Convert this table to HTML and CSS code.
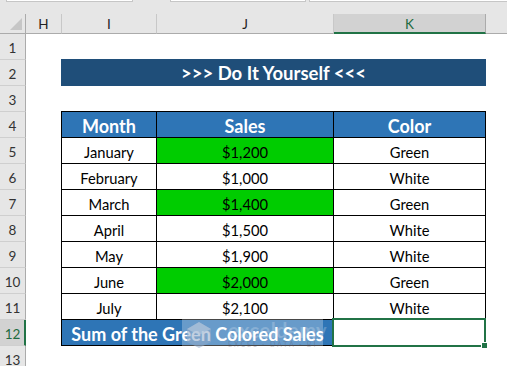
FILE: index.html
```html
<!DOCTYPE html>
<html>
<head>
<meta charset="utf-8">
<link rel="stylesheet" href="styles.css">
</head>
<body>
<div class="sheet">
  <div class="topbar">
    <div class="box namebox"></div>
    <div class="box fxbox"></div>
    <div class="box formula"></div>
  </div>
  <div class="hdr">
    <div class="corner"><svg width="12" height="12" viewBox="0 0 12 12"><polygon points="12,0 12,12 0,12" fill="#c6c6c6"/></svg></div>
    <div class="ch">H</div>
    <div class="ch">I</div>
    <div class="ch">J</div>
    <div class="ch sel">K</div>
    <div class="ch rest"></div>
  </div>
  <div class="main">
    <div class="rowhdrs">
      <div class="rh">1</div>
      <div class="rh">2</div>
      <div class="rh">3</div>
      <div class="rh">4</div>
      <div class="rh">5</div>
      <div class="rh">6</div>
      <div class="rh">7</div>
      <div class="rh">8</div>
      <div class="rh">9</div>
      <div class="rh">10</div>
      <div class="rh">11</div>
      <div class="rh sel">12</div>
      <div class="rh">13</div>
    </div>
    <div class="cells">
      <div class="title">&gt;&gt;&gt; Do It Yourself &lt;&lt;&lt;</div>
      <table class="data">
        <colgroup><col class="c1"><col class="c2"><col class="c3"></colgroup>
        <tr class="head"><td>Month</td><td>Sales</td><td>Color</td></tr>
        <tr><td>January</td><td class="green">$1,200</td><td>Green</td></tr>
        <tr><td>February</td><td>$1,000</td><td>White</td></tr>
        <tr><td>March</td><td class="green">$1,400</td><td>Green</td></tr>
        <tr><td>April</td><td>$1,500</td><td>White</td></tr>
        <tr><td>May</td><td>$1,900</td><td>White</td></tr>
        <tr><td>June</td><td class="green">$2,000</td><td>Green</td></tr>
        <tr><td>July</td><td>$2,100</td><td>White</td></tr>
        <tr class="sum"><td colspan="2" class="sumlabel">Sum of the Green Colored Sales</td><td class="active"><span class="handle"></span></td></tr>
      </table>
    </div>
  </div>
  <div class="watermark">
    <svg class="wm-logo" width="26" height="28" viewBox="0 0 26 28"><polygon points="13,1 25,8 25,21 13,27 1,21 1,8" fill="#8fa9c8" opacity="0.55"/><polygon points="13,1 25,8 13,14 1,8" fill="#b9cbe0" opacity="0.6"/></svg>
    <div class="wm-text">
      <div class="wm-name">exceldemy</div>
      <div class="wm-sub">EXCEL · DATA · BI</div>
    </div>
  </div>
</div>
</body>
</html>
```
FILE: styles.css
```css
html, body {
  margin: 0;
  padding: 0;
  background: #ffffff;
}

body {
  width: 507px;
  height: 366px;
  overflow: hidden;
  font-family: Lato, "Open Sans", sans-serif;
}

.sheet {
  position: relative;
  width: 507px;
  height: 366px;
  overflow: hidden;
}

.topbar {
  height: 14px;
  background: #e6e6e6;
  display: flex;
  align-items: flex-start;
}

.box {
  height: 1px;
  background: #ffffff;
  border: 1px solid #c6c6c6;
  border-top: none;
}

.namebox {
  margin-left: 6px;
  width: 125px;
}

.fxbox {
  margin-left: 37px;
  width: 134px;
}

.formula {
  margin-left: 3px;
  flex: 1;
  border-right: none;
}

.hdr {
  display: grid;
  grid-template-columns: 26px 36px 95px 177px 152px 1fr;
  height: 20px;
}

.corner,
.ch {
  box-sizing: border-box;
  background: #e6e6e6;
  border-right: 1px solid #c8c8c8;
  border-bottom: 1px solid #ababab;
}

.corner {
  display: flex;
  align-items: flex-end;
  justify-content: flex-end;
  padding: 0 3px 3px 0;
  border-right-color: #ababab;
}

.corner svg {
  display: block;
}

.ch {
  display: flex;
  align-items: center;
  justify-content: center;
  font-size: 13.5px;
  color: #222222;
  padding-top: 1px;
}

.ch.sel {
  background: #d2d2d2;
  color: #1e6b40;
  border-bottom: 2px solid #217346;
  border-right-color: #ababab;
}

.ch.rest {
  border-right: none;
}

.main {
  display: flex;
}

.rowhdrs {
  width: 26px;
  display: flex;
  flex-direction: column;
}

.rh {
  box-sizing: border-box;
  height: 26px;
  background: #e6e6e6;
  border-right: 1px solid #ababab;
  border-bottom: 1px solid #cfcfcf;
  display: flex;
  align-items: flex-end;
  justify-content: center;
  padding-bottom: 4px;
  font-size: 13.5px;
  line-height: 13px;
  color: #333333;
}

.rh.sel {
  background: #d2d2d2;
  color: #1e6b40;
  border-right: 2px solid #217346;
  padding-left: 1px;
}

.cells {
  flex: 1;
  display: grid;
  grid-template-columns: 36px 95px 177px 152px 1fr;
  grid-template-rows: repeat(13, 26px);
}

.title {
  grid-row: 2;
  grid-column: 2 / 5;
  margin: -1px 0 0 -1px;
  height: 27px;
  background: #1f4e79;
  color: #ffffff;
  font-weight: 700;
  font-size: 18.5px;
  display: flex;
  align-items: center;
  justify-content: center;
  padding-top: 1px;
  box-sizing: border-box;
}

.data {
  grid-row: 4 / span 9;
  grid-column: 2 / 5;
  align-self: start;
  margin: -1px 0 0 -1px;
  width: 425px;
  table-layout: fixed;
  border-collapse: separate;
  border-spacing: 0;
  border-left: 1px solid #000000;
  border-top: 1px solid #000000;
}

.c1 { width: 95px; }
.c2 { width: 177px; }
.c3 { width: 152px; }

.data td {
  box-sizing: border-box;
  height: 26px;
  padding: 2px 0 0 0;
  border-right: 1px solid #000000;
  border-bottom: 1px solid #000000;
  text-align: center;
  vertical-align: middle;
  font-size: 14.7px;
  line-height: 16px;
  color: #000000;
  white-space: nowrap;
}

.data .head td {
  background: #2e75b6;
  color: #ffffff;
  font-weight: 700;
  font-size: 18px;
}

.data td.green {
  background: #00cc00;
}

.data td.sumlabel {
  background: #2e75b6;
  color: #ffffff;
  font-weight: 700;
  font-size: 18px;
}

.data td.active {
  position: relative;
}

.data td.active::after {
  content: "";
  position: absolute;
  left: -2px;
  top: -2px;
  right: -1px;
  bottom: -2px;
  border: 2px solid #217346;
}

.handle {
  position: absolute;
  right: -3px;
  bottom: -4px;
  width: 5px;
  height: 5px;
  background: #217346;
  border: 1px solid #ffffff;
  z-index: 2;
}

.watermark {
  position: absolute;
  left: 182px;
  top: 318px;
  width: 141px;
  height: 32px;
  background: rgba(255, 255, 255, 0.28);
  display: flex;
  align-items: flex-start;
  gap: 6px;
  padding: 2px 0 0 4px;
  box-sizing: border-box;
  pointer-events: none;
}

.wm-logo {
  flex: none;
  margin-top: 1px;
}

.wm-text {
  display: flex;
  flex-direction: column;
  align-items: flex-start;
  padding-left: 10px;
}

.wm-name {
  font-size: 20px;
  line-height: 20px;
  font-weight: 700;
  color: rgba(255, 255, 255, 0.22);
  letter-spacing: 0.5px;
}

.wm-sub {
  font-size: 7px;
  line-height: 8px;
  letter-spacing: 2px;
  color: rgba(90, 90, 110, 0.35);
}
```
